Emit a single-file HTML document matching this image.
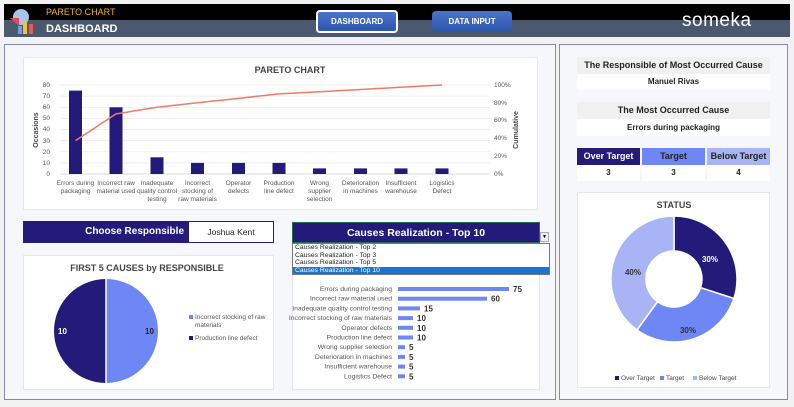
<!DOCTYPE html>
<html><head><meta charset="utf-8"><style>
*{margin:0;padding:0;box-sizing:border-box}
body{width:794px;height:407px;background:#f2f2f2;font-family:"Liberation Sans",sans-serif;position:relative;overflow:hidden}
.a{position:absolute}
.card{position:absolute;background:#fff;border:1px solid #e4e6ee}
.c{text-align:center}
.btn{position:absolute;color:#fff;font-size:8px;font-weight:bold;text-align:center;border-radius:4px;background:linear-gradient(#4b74cc,#2d55a8)}
.hd{background:#f0f0f0;font-weight:bold;font-size:9px;color:#222;text-align:center}
.vl{background:#fff;font-size:8px;color:#222;text-align:center}
</style></head><body>
<!-- header -->
<div class="a" style="left:4px;top:4px;width:786px;height:16px;background:#000"></div>
<div class="a" style="left:4px;top:20px;width:786px;height:17px;background:#4b586d"></div>
<svg class="a" style="left:4px;top:4px" width="32" height="33">
<circle cx="17" cy="13" r="8" fill="#a9c3ea"/>
<path d="M6 14h9v8z" fill="#e04a55"/>
<rect x="19" y="17" width="4" height="13" fill="#f4c430"/>
<rect x="14" y="22" width="4" height="8" fill="#6aa0e0"/>
<rect x="25" y="20" width="4" height="10" fill="#e05a5a"/>
</svg>
<div class="a" style="left:46px;top:7px;font-size:9px;color:#f0b030">PARETO CHART</div>
<div class="a" style="left:46px;top:23px;font-size:11px;font-weight:bold;color:#fff">DASHBOARD</div>
<div class="btn" style="left:316px;top:10px;width:82px;height:23px;line-height:19px;border:2px solid #fff">DASHBOARD</div>
<div class="btn" style="left:432px;top:11px;width:80px;height:21px;line-height:21px">DATA INPUT</div>
<div class="a" style="left:682px;top:10px;font-size:19px;color:#fff;letter-spacing:0.5px">someka</div>

<!-- panels -->
<div class="a" style="left:4px;top:44px;width:552px;height:356px;background:#f6f7fb;border:1px solid #8a86b8"></div>
<div class="a" style="left:559px;top:44px;width:229px;height:356px;background:#f6f7fb;border:1px solid #8a86b8"></div>

<!-- pareto -->
<div class="card" style="left:23px;top:57px;width:515px;height:153px"></div>
<svg class="a" style="left:0;top:0" width="560" height="215" font-family="Liberation Sans,sans-serif">
<text x="290" y="73" font-size="9" font-weight="bold" fill="#444" text-anchor="middle">PARETO CHART</text>
<g stroke="#e8e8e8" stroke-width="0.7">
<line x1="60" x2="490" y1="85" y2="85"/><line x1="60" x2="490" y1="96.1" y2="96.1"/><line x1="60" x2="490" y1="107.3" y2="107.3"/><line x1="60" x2="490" y1="118.4" y2="118.4"/><line x1="60" x2="490" y1="129.5" y2="129.5"/><line x1="60" x2="490" y1="140.6" y2="140.6"/><line x1="60" x2="490" y1="151.8" y2="151.8"/><line x1="60" x2="490" y1="162.9" y2="162.9"/><line x1="60" x2="490" y1="174" y2="174" stroke="#ccc"/>
</g>
<g font-size="6.5" fill="#555" text-anchor="end">
<text x="50" y="87">80</text><text x="50" y="98">70</text><text x="50" y="109">60</text><text x="50" y="120">50</text><text x="50" y="131">40</text><text x="50" y="143">30</text><text x="50" y="154">20</text><text x="50" y="165">10</text><text x="50" y="176">0</text>
</g>
<g font-size="6.5" fill="#555">
<text x="494" y="87">100%</text><text x="494" y="105">80%</text><text x="494" y="122">60%</text><text x="494" y="140">40%</text><text x="494" y="158">20%</text><text x="494" y="176">0%</text>
</g>
<text transform="translate(38,130) rotate(-90)" font-size="7" font-weight="bold" fill="#444" text-anchor="middle">Occasions</text>
<text transform="translate(518,130) rotate(-90)" font-size="7" font-weight="bold" fill="#444" text-anchor="middle">Cumulative</text>
<g fill="#231a7a">
<rect x="69" y="90.6" width="13" height="83.4"/>
<rect x="109.5" y="107.3" width="13" height="66.7"/>
<rect x="150.5" y="157.3" width="13" height="16.7"/>
<rect x="191" y="162.9" width="13" height="11.1"/>
<rect x="232" y="162.9" width="13" height="11.1"/>
<rect x="272.5" y="162.9" width="13" height="11.1"/>
<rect x="313" y="168.4" width="13" height="5.6"/>
<rect x="354" y="168.4" width="13" height="5.6"/>
<rect x="394.5" y="168.4" width="13" height="5.6"/>
<rect x="435.5" y="168.4" width="13" height="5.6"/>
</g>
<polyline fill="none" stroke="#f07a6a" stroke-width="1.5" points="75.5,140.6 116,113.9 157,107.3 197.5,102.8 238.5,98.4 279,93.9 319.5,91.7 360.5,89.5 401,87.2 442,85"/>
<g font-size="6.5" fill="#555" text-anchor="middle">
<text x="75.5" y="185">Errors during</text><text x="75.5" y="193">packaging</text>
<text x="116" y="185">Incorrect raw</text><text x="116" y="193">material used</text>
<text x="157" y="185">Inadequate</text><text x="157" y="193">quality control</text><text x="157" y="201">testing</text>
<text x="197.5" y="185">Incorrect</text><text x="197.5" y="193">stocking of</text><text x="197.5" y="201">raw materials</text>
<text x="238.5" y="185">Operator</text><text x="238.5" y="193">defects</text>
<text x="279" y="185">Production</text><text x="279" y="193">line defect</text>
<text x="319.5" y="185">Wrong</text><text x="319.5" y="193">supplier</text><text x="319.5" y="201">selection</text>
<text x="360.5" y="185">Deterioration</text><text x="360.5" y="193">in machines</text>
<text x="401" y="185">Insufficient</text><text x="401" y="193">warehouse</text>
<text x="442" y="185">Logistics</text><text x="442" y="193">Defect</text>
</g>
</svg>

<!-- choose responsible -->
<div class="a" style="left:23px;top:221px;width:251px;height:22px;background:#231a7a;border:1px solid #231a7a"></div>
<div class="a" style="left:23px;top:221px;width:166px;height:22px;line-height:22px;color:#fff;font-weight:bold;font-size:10px;text-align:right;padding-right:5px">Choose Responsible</div>
<div class="a c" style="left:189px;top:222px;width:84px;height:20px;line-height:20px;background:#fff;font-size:8.5px;color:#222">Joshua Kent</div>
<div class="card" style="left:23px;top:255px;width:251px;height:135px"></div>
<svg class="a" style="left:0;top:250px" width="280" height="150" font-family="Liberation Sans,sans-serif">
<text x="147" y="21" font-size="9" font-weight="bold" fill="#444" text-anchor="middle">FIRST 5 CAUSES by RESPONSIBLE</text>
<path d="M106 29A52 52 0 0 1 106 133Z" fill="#6f86f5"/>
<path d="M106 29A52 52 0 0 0 106 133Z" fill="#231a7a"/>
<line x1="106" y1="29" x2="106" y2="133" stroke="#fff" stroke-width="1.5"/>
<text x="58" y="84" font-size="8" font-weight="bold" fill="#fff">10</text>
<text x="145" y="84" font-size="8" font-weight="bold" fill="#222">10</text>
<rect x="189" y="65" width="4" height="4" fill="#6f86f5"/>
<text x="195" y="69" font-size="6.5" fill="#555">Incorrect stocking of raw</text>
<text x="195" y="77" font-size="6.5" fill="#555">materials</text>
<rect x="189" y="86" width="4" height="4" fill="#231a7a"/>
<text x="195" y="90" font-size="6.5" fill="#555">Production line defect</text>
</svg>

<!-- causes realization -->
<div class="card" style="left:292px;top:243px;width:248px;height:147px"></div>
<div class="a c" style="left:292px;top:222px;width:248px;height:21px;line-height:20px;background:#231a7a;border:1px solid #2a6a50;color:#fff;font-weight:bold;font-size:10.5px">Causes Realization - Top 10</div>
<div class="a" style="left:540px;top:232px;width:9px;height:10px;background:#eee;border:1px solid #aaa;font-size:5px;text-align:center;line-height:8px">▼</div>
<div class="a" style="left:292px;top:243px;width:258px;height:32px;background:#fff;border:1px solid #777;font-size:6.8px;color:#222;line-height:7.5px">
<div style="padding-left:2px">Causes Realization - Top 2</div>
<div style="padding-left:2px">Causes Realization - Top 3</div>
<div style="padding-left:2px">Causes Realization - Top 5</div>
<div style="padding-left:2px;background:#1a74d0;color:#fff">Causes Realization - Top 10</div>
</div>
<svg class="a" style="left:280px;top:280px" width="270" height="105" font-family="Liberation Sans,sans-serif">
<g font-size="6.8" fill="#555" text-anchor="end">
<text x="112" y="11">Errors during packaging</text>
<text x="112" y="20.7">Incorrect raw material used</text>
<text x="112" y="30.4">Inadequate quality control testing</text>
<text x="112" y="40.1">Incorrect stocking of raw materials</text>
<text x="112" y="49.8">Operator defects</text>
<text x="112" y="59.5">Production line defect</text>
<text x="112" y="69.2">Wrong supplier selection</text>
<text x="112" y="78.9">Deterioration in machines</text>
<text x="112" y="88.6">Insufficient warehouse</text>
<text x="112" y="98.3">Logistics Defect</text>
</g>
<g fill="#6f86f5">
<rect x="118" y="7" width="111" height="4"/>
<rect x="118" y="16.7" width="89" height="4"/>
<rect x="118" y="26.4" width="22" height="4"/>
<rect x="118" y="36.1" width="15" height="4"/>
<rect x="118" y="45.8" width="15" height="4"/>
<rect x="118" y="55.5" width="15" height="4"/>
<rect x="118" y="65.2" width="7" height="4"/>
<rect x="118" y="74.9" width="7" height="4"/>
<rect x="118" y="84.6" width="7" height="4"/>
<rect x="118" y="94.3" width="7" height="4"/>
</g>
<g font-size="8" font-weight="bold" fill="#333">
<text x="233" y="12">75</text><text x="211" y="21.7">60</text><text x="144" y="31.4">15</text><text x="137" y="41.1">10</text><text x="137" y="50.8">10</text><text x="137" y="60.5">10</text><text x="129" y="70.2">5</text><text x="129" y="79.9">5</text><text x="129" y="89.6">5</text><text x="129" y="99.3">5</text>
</g>
</svg>

<!-- right panel -->
<div class="a hd" style="left:577px;top:57px;width:193px;height:17px;line-height:17px">The Responsible of Most Occurred Cause</div>
<div class="a vl" style="left:577px;top:74px;width:193px;height:16px;line-height:16px;font-weight:bold">Manuel Rivas</div>
<div class="a hd" style="left:577px;top:102px;width:193px;height:17px;line-height:17px">The Most Occurred Cause</div>
<div class="a vl" style="left:577px;top:119px;width:193px;height:17px;line-height:17px;font-weight:bold">Errors during packaging</div>
<div class="a c" style="left:577px;top:148px;width:63px;height:17px;line-height:17px;background:#231a7a;color:#fff;font-weight:bold;font-size:9px">Over Target</div>
<div class="a c" style="left:642px;top:148px;width:63px;height:17px;line-height:17px;background:#6f86f5;color:#222;font-weight:bold;font-size:9px">Target</div>
<div class="a c" style="left:707px;top:148px;width:63px;height:17px;line-height:17px;background:#a9b4f7;color:#222;font-weight:bold;font-size:9px">Below Target</div>
<div class="a vl" style="left:577px;top:165px;width:63px;height:16px;line-height:16px;font-weight:bold">3</div>
<div class="a vl" style="left:642px;top:165px;width:63px;height:16px;line-height:16px;font-weight:bold">3</div>
<div class="a vl" style="left:707px;top:165px;width:63px;height:16px;line-height:16px;font-weight:bold">4</div>
<div class="card" style="left:577px;top:192px;width:193px;height:196px"></div>
<svg class="a" style="left:560px;top:190px" width="230" height="210" font-family="Liberation Sans,sans-serif">
<g transform="translate(-560,-190)" stroke="#fff" stroke-width="1.5">
<path d="M674 216A63 63 0 0 1 733.9 298.5L700.6 287.7A28 28 0 0 0 674 251Z" fill="#231a7a"/>
<path d="M733.9 298.5A63 63 0 0 1 637 330L657.5 301.7A28 28 0 0 0 700.6 287.7Z" fill="#6f86f5"/>
<path d="M637 330A63 63 0 0 1 674 216L674 251A28 28 0 0 0 657.5 301.7Z" fill="#a9b4f7"/>
</g>
<text x="114" y="18" font-size="9" font-weight="bold" fill="#444" text-anchor="middle">STATUS</text>
<text x="150" y="72" font-size="8" font-weight="bold" fill="#fff" text-anchor="middle">30%</text>
<text x="128" y="143" font-size="8" font-weight="bold" fill="#333" text-anchor="middle">30%</text>
<text x="73" y="85" font-size="8" font-weight="bold" fill="#333" text-anchor="middle">40%</text>
<g font-size="6.5" fill="#444">
<rect x="55" y="186" width="4" height="4" fill="#231a7a"/><text x="61" y="190">Over Target</text>
<rect x="100" y="186" width="4" height="4" fill="#6f86f5"/><text x="106" y="190">Target</text>
<rect x="133" y="186" width="4" height="4" fill="#a9b4f7"/><text x="139" y="190">Below Target</text>
</g>
</svg>
</body></html>
